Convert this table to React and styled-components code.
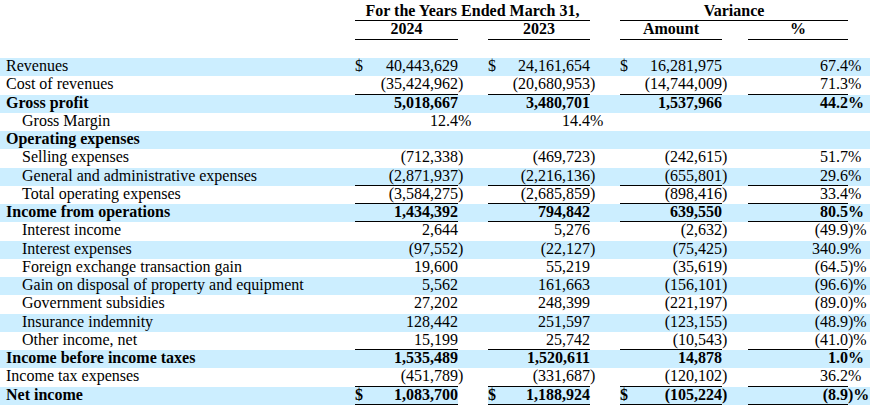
import React from "react";
import styled, { createGlobalStyle } from "styled-components";

const GlobalStyle = createGlobalStyle`
    body {
        margin: 0;
        background: #fff;
        color: #000;
        font-family: "Liberation Serif", "Times New Roman", serif;
        font-size: 16px;
    }
`;

const BAND = '#cceeff';

// label | 2024 | ) | gap | 2023 | ) | gap | amount | ) | gap | % | )%
const COLUMNS = '355px 103px 6px 24px 102px 6px 24px 102px 6px 20px 100px 22px';

const Sheet = styled.div`
    width: 870px;
`;

const HeadRow = styled.div`
    display: grid;
    grid-template-columns: ${COLUMNS};
    height: ${props => props.$h}px;
    font-weight: 700;
    line-height: 15px;
`;

const HeadCell = styled.div`
    grid-column: ${props => props.$span};
    text-align: center;
    padding-top: ${props => props.$top}px;
    border-bottom: 1px solid #000;
    box-sizing: border-box;
    white-space: nowrap;
`;

const Spacer = styled.div`
    height: 18px;
`;

const Row = styled.div`
    display: grid;
    grid-template-columns: ${COLUMNS};
    height: 18.25px;
    line-height: 16.8px;
    background: ${props => props.$shade && !props.$split ? BAND : 'transparent'};
    font-weight: ${props => props.$bold ? 700 : 400};
    white-space: nowrap;
`;

const Label = styled.div`
    padding-left: ${props => props.$indent ? 22 : 6}px;
    background: ${props => props.$fill ? BAND : 'transparent'};
`;

const Money = styled.div`
    display: flex;
    justify-content: space-between;
    box-sizing: border-box;
    border-bottom: ${props => props.$rule ? '1px solid #000' : 'none'};
    background: ${props => props.$fill ? BAND : 'transparent'};
`;

const Suffix = styled.div`
    overflow: visible;
    background: ${props => props.$fill ? BAND : 'transparent'};
`;

const Gap = styled.div`
    background: ${props => props.$fill ? BAND : 'transparent'};
`;

const split = (v) => {
    if (!v) return ['', ''];
    const m = v.match(/^(.*?)(\)?%?)$/);
    return [m[1], m[2]];
};

const rows = [
    {label: 'Revenues', cur: true, v: ['40,443,629', '24,161,654', '16,281,975', '67.4%']},
    {label: 'Cost of revenues', rule: true, v: ['(35,424,962)', '(20,680,953)', '(14,744,009)', '71.3%']},
    {label: 'Gross profit', bold: true, v: ['5,018,667', '3,480,701', '1,537,966', '44.2%']},
    {label: 'Gross Margin', indent: true, v: ['12.4%', '14.4%', '', '']},
    {label: 'Operating expenses', bold: true, v: ['', '', '', '']},
    {label: 'Selling expenses', indent: true, v: ['(712,338)', '(469,723)', '(242,615)', '51.7%']},
    {label: 'General and administrative expenses', indent: true, rule: true, v: ['(2,871,937)', '(2,216,136)', '(655,801)', '29.6%']},
    {label: 'Total operating expenses', indent: true, rule: true, v: ['(3,584,275)', '(2,685,859)', '(898,416)', '33.4%']},
    {label: 'Income from operations', bold: true, rule: true, v: ['1,434,392', '794,842', '639,550', '80.5%']},
    {label: 'Interest income', indent: true, v: ['2,644', '5,276', '(2,632)', '(49.9)%']},
    {label: 'Interest expenses', indent: true, v: ['(97,552)', '(22,127)', '(75,425)', '340.9%']},
    {label: 'Foreign exchange transaction gain', indent: true, v: ['19,600', '55,219', '(35,619)', '(64.5)%']},
    {label: 'Gain on disposal of property and equipment', indent: true, v: ['5,562', '161,663', '(156,101)', '(96.6)%']},
    {label: 'Government subsidies', indent: true, v: ['27,202', '248,399', '(221,197)', '(89.0)%']},
    {label: 'Insurance indemnity', indent: true, v: ['128,442', '251,597', '(123,155)', '(48.9)%']},
    {label: 'Other income, net', indent: true, rule: true, v: ['15,199', '25,742', '(10,543)', '(41.0)%']},
    {label: 'Income before income taxes', bold: true, v: ['1,535,489', '1,520,611', '14,878', '1.0%']},
    {label: 'Income tax expenses', rule: true, v: ['(451,789)', '(331,687)', '(120,102)', '36.2%']},
    {label: 'Net income', bold: true, cur: true, rule: true, split: true, v: ['1,083,700', '1,188,924', '(105,224)', '(8.9)%']},
];

const Line = ({row, shade}) => {
    const fill = row.split && shade;
    const cells = [];
    row.v.forEach((value, i) => {
        const [num, tail] = split(value);
        const dollar = row.cur && i < 3 ? '$' : '';
        cells.push(
            <Money key={'m' + i} $rule={row.rule} $fill={fill}>
                <span>{dollar}</span>
                <span>{num}</span>
            </Money>
        );
        cells.push(<Suffix key={'s' + i} $fill={fill && tail !== ''}>{tail}</Suffix>);
        if (i < 3) cells.push(<Gap key={'g' + i} $fill={fill && i === 2} />);
    });
    return (
        <Row $shade={shade} $bold={row.bold} $split={row.split}>
            <Label $indent={row.indent} $fill={fill}>{row.label}</Label>
            {cells}
        </Row>
    );
};

const App = () => {
    return (
        <Sheet>
            <GlobalStyle />
            <HeadRow $h={21}>
                <HeadCell $span='2 / 6' $top={3}>For the Years Ended March 31,</HeadCell>
                <HeadCell $span='8 / 12' $top={3}>Variance</HeadCell>
            </HeadRow>
            <HeadRow $h={19}>
                <HeadCell $span='2 / 3' $top={0}>2024</HeadCell>
                <HeadCell $span='5 / 6' $top={0}>2023</HeadCell>
                <HeadCell $span='8 / 9' $top={0}>Amount</HeadCell>
                <HeadCell $span='11 / 12' $top={0}>%</HeadCell>
            </HeadRow>
            <Spacer />
            {rows.map((row, i) => (
                <Line key={row.label} row={row} shade={i % 2 === 0} />
            ))}
        </Sheet>
    );
};

export default App;
